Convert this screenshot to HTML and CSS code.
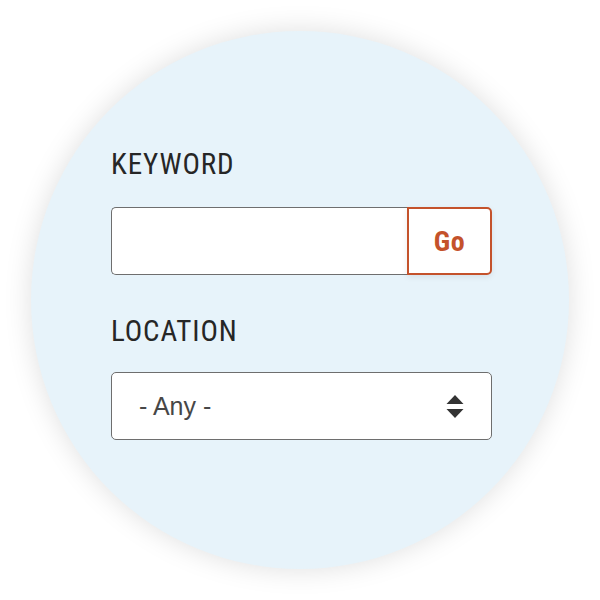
FILE: index.html
```html
<!DOCTYPE html>
<html lang="en">
  <head>
    <meta charset="UTF-8" />
    <meta name="viewport" content="width=device-width, initial-scale=1.0" />
    <title>Job Search</title>
    <link rel="stylesheet" href="styles.css">
  </head>
  <body>
    <div class="circle">
      <form class="search-form">
        <label class="field-label" for="keyword">KEYWORD</label>
        <div class="keyword-row">
          <input type="text" id="keyword" name="keyword" />
          <button type="button" class="go-btn">Go</button>
        </div>

        <label class="field-label location-label" for="location">LOCATION</label>
        <div class="select-wrap">
          <select id="location" name="location">
            <option value="">- Any -</option>
          </select>
          <svg class="select-arrows" width="18" height="24" viewBox="0 0 18 24">
            <polygon points="9,0 17.5,9 0.5,9" fill="#333" />
            <polygon points="0.5,14 17.5,14 9,23" fill="#333" />
          </svg>
        </div>
      </form>
    </div>
  </body>
</html>
```

FILE: styles.css
```css
body {
  margin: 0;
  background: #fff;
  font-family: "Liberation Sans", Arial, sans-serif;
}
.circle {
  width: 538px;
  height: 538px;
  margin: 31px;
  border-radius: 50%;
  background: #e7f3fa;
  box-shadow: 0 0 28px rgba(0, 0, 0, 0.13);
  box-sizing: border-box;
  padding: 116px 77px 0 80px;
}
.search-form {
  display: flex;
  flex-direction: column;
}
.field-label {
  font-family: "Liberation Sans Narrow", "Arial Narrow", "Roboto Condensed", sans-serif;
  font-size: 29px;
  line-height: 34px;
  color: #262626;
  letter-spacing: 0.9px;
}
.location-label {
  margin-top: 39px;
}
.keyword-row {
  display: flex;
  height: 68px;
  margin-top: 26px;
}
.keyword-row input {
  flex: 1;
  min-width: 0;
  border: 1px solid #6e6e6e;
  border-right: none;
  border-radius: 5px 0 0 5px;
  background: #fff;
  margin: 0;
}
.go-btn {
  width: 85px;
  border: 2px solid #c4522b;
  border-radius: 0 5px 5px 0;
  background: #fff;
  color: #c4522b;
  font-family: "Liberation Sans Narrow", "Arial Narrow", "Roboto Condensed", sans-serif;
  font-weight: bold;
  font-size: 28px;
  letter-spacing: 0.5px;
  padding: 0;
  margin: 0;
  box-shadow: 0 2px 6px rgba(0, 0, 0, 0.08);
}
.select-wrap {
  position: relative;
  margin-top: 24px;
  height: 68px;
}
.select-wrap select {
  width: 100%;
  height: 68px;
  appearance: none;
  -webkit-appearance: none;
  border: 1px solid #6e6e6e;
  border-radius: 5px;
  background: #fff;
  padding: 0 0 0 27px;
  font-family: "Liberation Sans", Arial, sans-serif;
  font-size: 25px;
  color: #474747;
}
.select-arrows {
  position: absolute;
  right: 28px;
  top: 23px;
  pointer-events: none;
}
```
